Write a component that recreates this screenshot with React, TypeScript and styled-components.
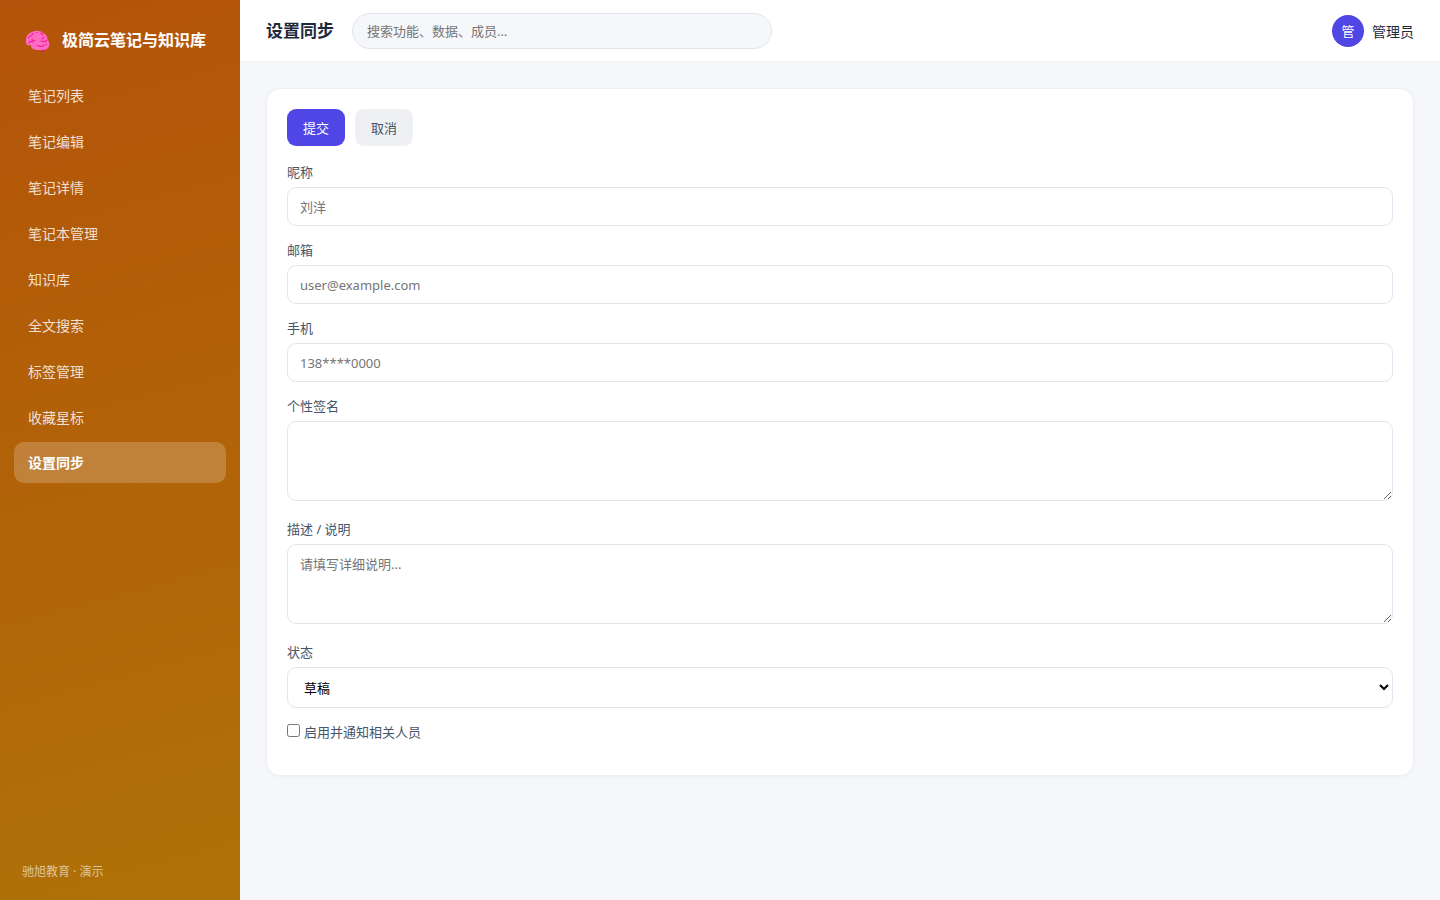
import React from "react";
import styled, { createGlobalStyle, css } from "styled-components";

const GlobalStyle = createGlobalStyle`
  * { box-sizing: border-box; }
  body {
    margin: 0;
    background: #f5f7fb;
    color: #1e293b;
    font-family: "Noto Sans", "Noto Sans CJK SC", sans-serif;
    font-size: 14px;
  }
  button, input, textarea, select { font-family: inherit; }
`;

const Shell = styled.div`
  display: flex;
  min-height: 100vh;
`;

const Sidebar = styled.aside`
  display: flex;
  flex-direction: column;
  flex: 0 0 240px;
  padding: 22px 14px 18px;
  background: linear-gradient(165deg, #b45309, #af7208);
  color: #fff;
`;

const Brand = styled.div`
  display: flex;
  align-items: center;
  gap: 10px;
  height: 34px;
  margin-bottom: 18px;
  padding: 0 8px;
  font-size: 16px;
  font-weight: 700;
  white-space: nowrap;
`;

const BrainSvg = styled.svg`
  width: 30px;
  height: 30px;
  flex: none;
`;

const Nav = styled.nav`
  display: flex;
  flex-direction: column;
  gap: 4px;
`;

const NavLink = styled.a<{ $active?: boolean }>`
  padding: 12px 14px 10px;
  border-radius: 10px;
  color: rgba(255, 255, 255, 0.82);
  font-size: 14px;
  line-height: 20px;
  text-decoration: none;
  ${(p) =>
    p.$active &&
    css`
      padding: 11px 14px 10px;
      background: rgba(255, 255, 255, 0.2);
      color: #fff;
      font-weight: 700;
    `}
`;

const SidebarFooter = styled.div`
  margin-top: auto;
  padding: 0 8px;
  color: rgba(255, 255, 255, 0.6);
  font-size: 12px;
  line-height: 20px;
`;

const Main = styled.div`
  flex: 1;
  min-width: 0;
`;

const Topbar = styled.header`
  display: flex;
  align-items: center;
  gap: 18px;
  height: 62px;
  padding: 0 26px;
  background: #fff;
  border-bottom: 1px solid #eef0f4;
`;

const Title = styled.h1`
  margin: 0;
  font-size: 17px;
  line-height: 24px;
  font-weight: 700;
  white-space: nowrap;
`;

const Search = styled.input`
  flex: 0 1 420px;
  min-width: 0;
  height: 36px;
  padding: 0 14px;
  border: 1px solid #e2e5ee;
  border-radius: 18px;
  background: #f6f7fb;
  font-size: 13px;
`;

const User = styled.div`
  display: flex;
  align-items: center;
  gap: 8px;
  margin-left: auto;
  font-size: 14px;
  white-space: nowrap;
`;

const Avatar = styled.span`
  display: grid;
  place-items: center;
  width: 32px;
  height: 32px;
  border-radius: 50%;
  background: #4f46e5;
  color: #fff;
  font-size: 13px;
`;

const Content = styled.main`
  padding: 26px;
`;

const Card = styled.form`
  padding: 20px;
  border: 1px solid #eef0f5;
  border-radius: 14px;
  background: #fff;
  box-shadow: 0 1px 4px rgba(15, 23, 42, 0.04);
`;

const Actions = styled.div`
  display: flex;
  gap: 10px;
  margin-bottom: 16px;
`;

const Button = styled.button<{ $primary?: boolean }>`
  height: 37px;
  padding: 0 16px;
  border: 0;
  border-radius: 9px;
  background: ${(p) => (p.$primary ? "#4f46e5" : "#eef0f4")};
  color: ${(p) => (p.$primary ? "#fff" : "#475569")};
  font-size: 13px;
`;

const Field = styled.div<{ $multiline?: boolean }>`
  display: flex;
  flex-direction: column;
  gap: 4px;
  margin-bottom: ${(p) => (p.$multiline ? 18 : 14)}px;
`;

const Label = styled.label`
  color: #475569;
  font-size: 13px;
  line-height: 21px;
`;

const controlStyle = css`
  width: 100%;
  border: 1px solid #e2e5ee;
  border-radius: 9px;
  background: #fff;
  font-size: 13px;
`;

const TextInput = styled.input`
  ${controlStyle}
  height: 39px;
  padding: 0 12px;
`;

const TextArea = styled.textarea`
  ${controlStyle}
  display: block;
  height: 80px;
  padding: 10px 12px;
  line-height: 18px;
  resize: both;
`;

const Select = styled.select`
  ${controlStyle}
  height: 41px;
  padding: 0 12px;
  color: #000;
`;

const CheckRow = styled.div`
  display: flex;
  align-items: flex-start;
  gap: 4px;
  margin-bottom: 12px;
`;

const Checkbox = styled.input`
  width: 13px;
  height: 13px;
  margin: 2px 0 0;
`;

function BrainIcon() {
  return (
    <BrainSvg viewBox="0 0 30 30" aria-hidden="true">
      <path d="M17.500 23h6.500l-2 5h-1.500l-3-4z" fill="#ee1183" />
      <path
        d="M4 19C3.500 13 5 10 9 8.500c4-2.500 9-2.500 12 .5 3 1 4.500 4 4.500 6.500 2 2.500 2.500 5 1.200 7.500-1 2-3.200 2.800-5.700 2.800-4 .4-8 .4-10-.8-1.500-1-2-2-2-4-3 .5-4.500.5-5-2z"
        fill="#ff6cc4"
      />
      <g fill="none" stroke="#f4219b" strokeWidth="1.200" strokeLinecap="round">
        <path d="M6 14c1-2 2-2.500 4-2.500M10 10.500l1-1M14.500 8.500h.7M18.500 9c2 0 2 1 2 2" />
        <path d="M7 19c1-2 3-2 4-1M10 15.500c1 1 2 1.500 3 1M20 15l2-1.500M19 17c2 1 4 1 6-.5" />
        <path d="M15 21.500c2 0 3 1 4 1s2.500-.3 3-1.500M24 20v1" />
      </g>
    </BrainSvg>
  );
}

const navItems = [
  "笔记列表",
  "笔记编辑",
  "笔记详情",
  "笔记本管理",
  "知识库",
  "全文搜索",
  "标签管理",
  "收藏星标",
  "设置同步",
];

const textFields = [
  { id: "nickname", label: "昵称", placeholder: "刘洋", type: "text" },
  { id: "email", label: "邮箱", placeholder: "user@example.com", type: "email" },
  { id: "phone", label: "手机", placeholder: "138****0000", type: "tel" },
];

export default function App() {
  return (
    <>
      <GlobalStyle />
      <Shell>
        <Sidebar>
          <Brand>
            <BrainIcon />
            <span>极简云笔记与知识库</span>
          </Brand>
          <Nav>
            {navItems.map((item) => (
              <NavLink
                key={item}
                href="#"
                $active={item === "设置同步"}
                aria-current={item === "设置同步" ? "page" : undefined}
              >
                {item}
              </NavLink>
            ))}
          </Nav>
          <SidebarFooter>驰旭教育 · 演示</SidebarFooter>
        </Sidebar>
        <Main>
          <Topbar>
            <Title>设置同步</Title>
            <Search type="search" aria-label="搜索" placeholder="搜索功能、数据、成员…" />
            <User>
              <Avatar>管</Avatar>
              <span>管理员</span>
            </User>
          </Topbar>
          <Content>
            <Card onSubmit={(e: React.FormEvent) => e.preventDefault()}>
              <Actions>
                <Button type="submit" $primary>
                  提交
                </Button>
                <Button type="button">取消</Button>
              </Actions>
              {textFields.map((f) => (
                <Field key={f.id}>
                  <Label htmlFor={f.id}>{f.label}</Label>
                  <TextInput id={f.id} type={f.type} placeholder={f.placeholder} />
                </Field>
              ))}
              <Field $multiline>
                <Label htmlFor="signature">个性签名</Label>
                <TextArea id="signature" />
              </Field>
              <Field $multiline>
                <Label htmlFor="description">描述 / 说明</Label>
                <TextArea id="description" placeholder="请填写详细说明..." />
              </Field>
              <Field>
                <Label htmlFor="status">状态</Label>
                <Select id="status" defaultValue="草稿">
                  <option>草稿</option>
                </Select>
              </Field>
              <CheckRow>
                <Checkbox id="notify" type="checkbox" />
                <Label htmlFor="notify">启用并通知相关人员</Label>
              </CheckRow>
            </Card>
          </Content>
        </Main>
      </Shell>
    </>
  );
}
